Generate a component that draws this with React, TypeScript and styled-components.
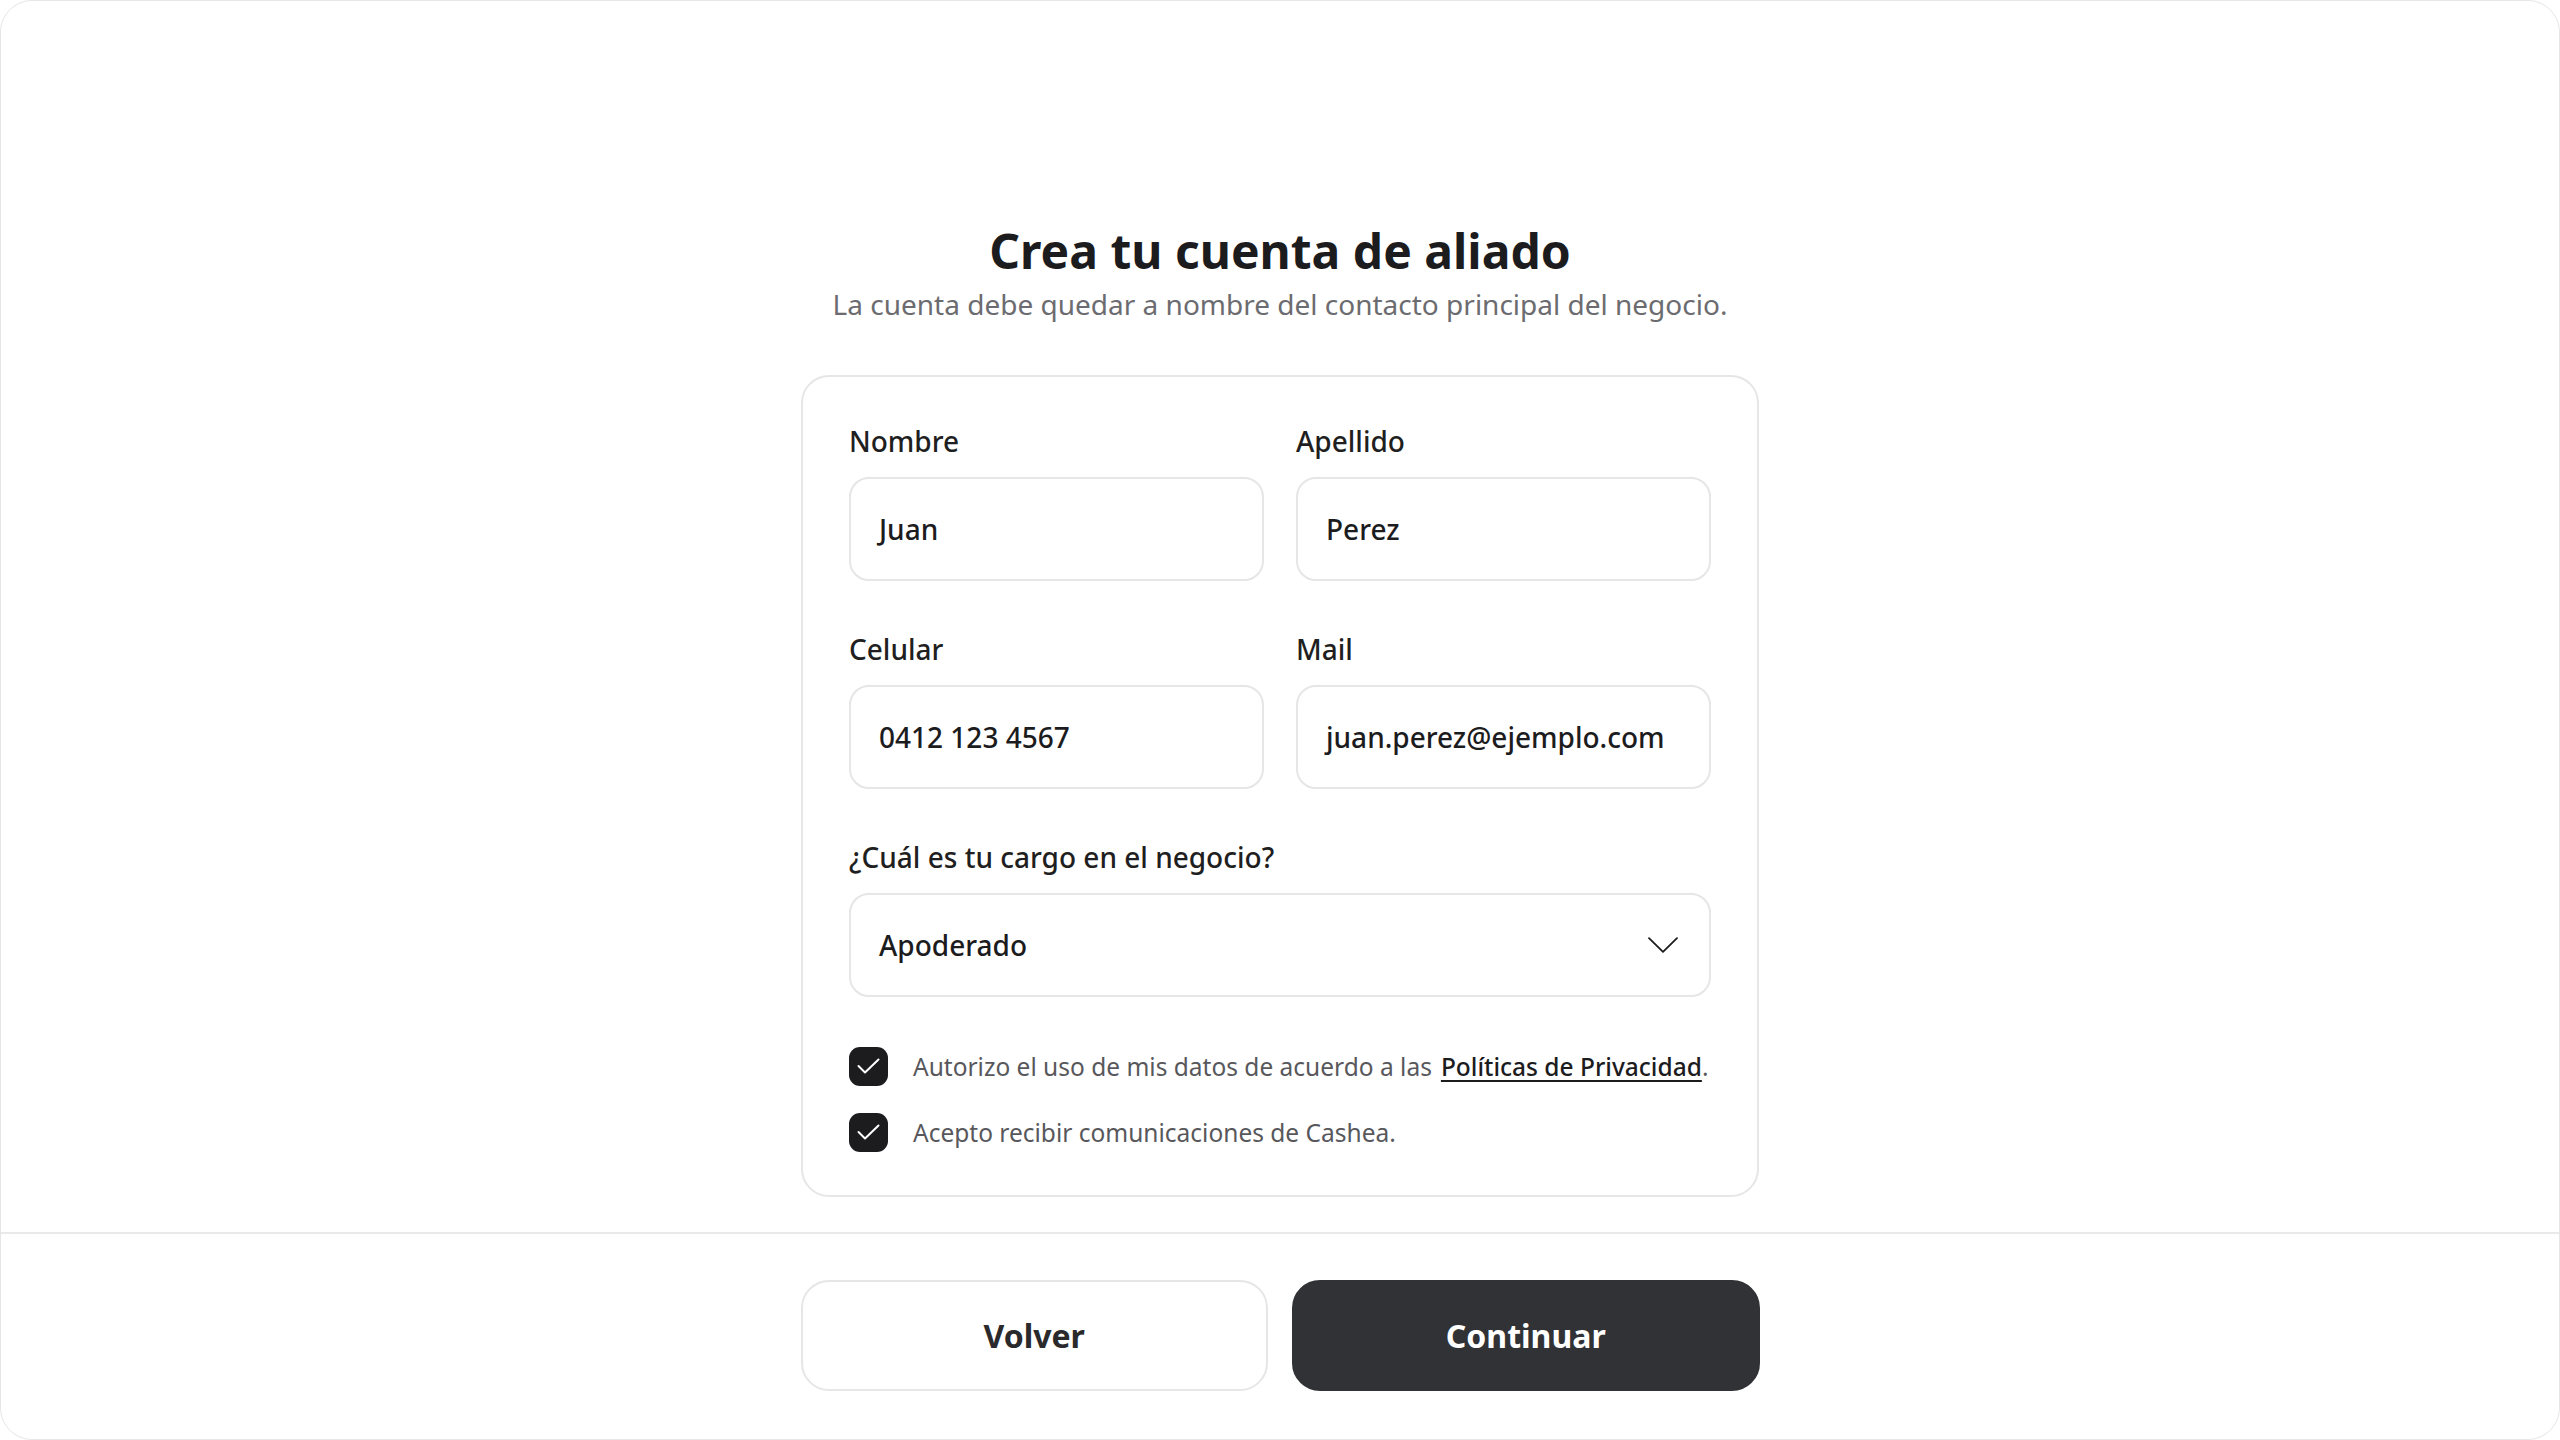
import React from "react";
import styled, { createGlobalStyle } from "styled-components";

const GlobalStyle = createGlobalStyle`
  html, body {
    margin: 0;
    padding: 0;
    background: #ffffff;
  }
  body {
    font-family: "Noto Sans", "Open Sans", sans-serif;
    color: #1c1c1e;
  }
  * { box-sizing: border-box; }
`;

const Frame = styled.div`
  height: 100vh;
  display: flex;
  flex-direction: column;
  border: 1px solid #e6e6e6;
  border-radius: 32px;
  overflow: hidden;
  background: #fff;
`;

const Main = styled.main`
  flex: 1;
  display: flex;
  flex-direction: column;
  align-items: center;
  padding-top: 220px;
`;

const Title = styled.h1`
  margin: 0;
  font-size: 48px;
  line-height: 60px;
  font-weight: 700;
  color: #1c1c1e;
  letter-spacing: 0;
`;

const Subtitle = styled.p`
  margin: 3px 0 0;
  font-size: 28px;
  line-height: 40px;
  font-weight: 400;
  color: #6c6c70;
`;

const Card = styled.section`
  margin-top: 51px;
  width: 958px;
  border: 2px solid #e6e6e6;
  border-radius: 28px;
  padding: 44px 46px 43px;
  display: flex;
  flex-direction: column;
  gap: 48px;
`;

const Grid = styled.div`
  display: grid;
  grid-template-columns: 1fr 1fr;
  column-gap: 32px;
  row-gap: 48px;
`;

const Field = styled.div<{ $full?: boolean }>`
  display: flex;
  flex-direction: column;
  gap: 16px;
  grid-column: ${(p) => (p.$full ? "1 / -1" : "auto")};
`;

const Label = styled.label`
  font-size: 28px;
  line-height: 40px;
  font-weight: 500;
  color: #1f1f21;
`;

const InputBox = styled.div`
  height: 104px;
  border: 2px solid #e6e6e6;
  border-radius: 20px;
  display: flex;
  align-items: center;
  justify-content: space-between;
  padding: 0 31px 0 28px;
  font-size: 28px;
  font-weight: 500;
  color: #1c1c1e;
`;

const Checks = styled.div`
  display: flex;
  flex-direction: column;
  gap: 26px;
  margin-top: 1px;
`;

const CheckRow = styled.div`
  display: flex;
  align-items: center;
  gap: 25px;
  height: 40px;
  font-size: 24.5px;
  color: #58585c;
`;

const Box = styled.span`
  width: 39px;
  height: 39px;
  border-radius: 11px;
  background: #1c1c1e;
  display: flex;
  align-items: center;
  justify-content: center;
  flex-shrink: 0;
`;

const Link = styled.a`
  color: #1c1c1e;
  font-weight: 500;
  text-decoration: underline;
  text-underline-offset: 4px;
  text-decoration-thickness: 2px;
  margin-left: 9px;
`;

const Footer = styled.footer`
  border-top: 2px solid #e9e9e9;
  display: flex;
  justify-content: center;
  padding: 46px 0 48px;
`;

const Buttons = styled.div`
  width: 959px;
  display: grid;
  grid-template-columns: 1fr 1fr;
  gap: 24px;
`;

const Button = styled.button<{ $primary?: boolean }>`
  height: 111px;
  border-radius: 28px;
  font-family: "Noto Sans", "Open Sans", sans-serif;
  font-size: 32px;
  font-weight: 700;
  cursor: pointer;
  border: 2px solid ${(p) => (p.$primary ? "#313236" : "#e6e6e6")};
  background: ${(p) => (p.$primary ? "#313236" : "#ffffff")};
  color: ${(p) => (p.$primary ? "#ffffff" : "#2a2a2d")};
`;

const Check = () => (
  <svg width="23" height="16" viewBox="0 0 23 16" fill="none">
    <path d="M1.5 8 L8 14.5 L21.5 1.5" stroke="#fff" strokeWidth="2" strokeLinecap="round" strokeLinejoin="round" />
  </svg>
);

const Chevron = () => (
  <svg width="30" height="16" viewBox="0 0 30 16" fill="none">
    <path d="M1 1.2 L15 14.8 L29 1.2" stroke="#1c1c1e" strokeWidth="1.8" strokeLinecap="round" strokeLinejoin="round" />
  </svg>
);

export default function App() {
  return (
    <>
      <GlobalStyle />
      <Frame>
        <Main>
          <Title>Crea tu cuenta de aliado</Title>
          <Subtitle>La cuenta debe quedar a nombre del contacto principal del negocio.</Subtitle>
          <Card>
            <Grid>
              <Field>
                <Label>Nombre</Label>
                <InputBox>Juan</InputBox>
              </Field>
              <Field>
                <Label>Apellido</Label>
                <InputBox>Perez</InputBox>
              </Field>
              <Field>
                <Label>Celular</Label>
                <InputBox>0412 123 4567</InputBox>
              </Field>
              <Field>
                <Label>Mail</Label>
                <InputBox>juan.perez@ejemplo.com</InputBox>
              </Field>
              <Field $full>
                <Label>¿Cuál es tu cargo en el negocio?</Label>
                <InputBox>
                  <span>Apoderado</span>
                  <Chevron />
                </InputBox>
              </Field>
            </Grid>
            <Checks>
              <CheckRow>
                <Box>
                  <Check />
                </Box>
                <span>
                  Autorizo el uso de mis datos de acuerdo a las
                  <Link>Políticas de Privacidad</Link>.
                </span>
              </CheckRow>
              <CheckRow>
                <Box>
                  <Check />
                </Box>
                <span>Acepto recibir comunicaciones de Cashea.</span>
              </CheckRow>
            </Checks>
          </Card>
        </Main>
        <Footer>
          <Buttons>
            <Button>Volver</Button>
            <Button $primary>Continuar</Button>
          </Buttons>
        </Footer>
      </Frame>
    </>
  );
}
